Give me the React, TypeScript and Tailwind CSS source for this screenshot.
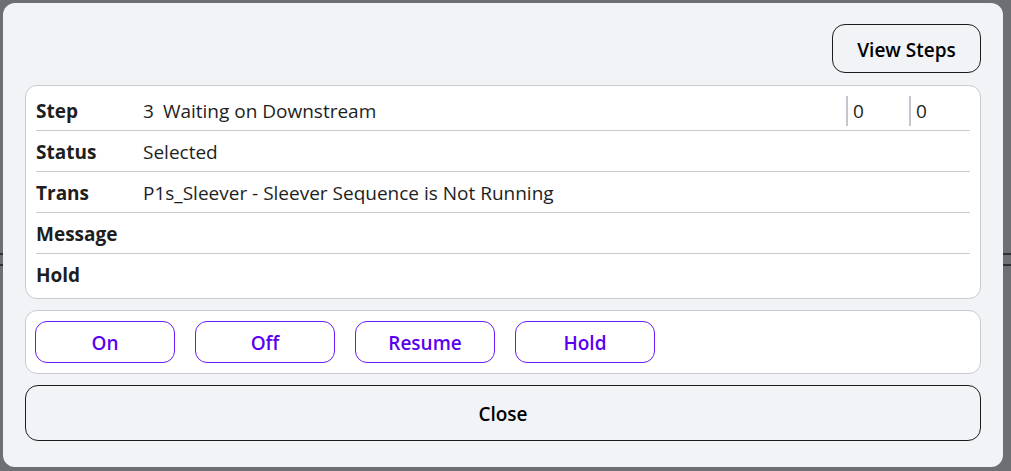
const rows = [
  { label: "Step", value: "" },
  { label: "Status", value: "Selected" },
  { label: "Trans", value: "P1s_Sleever - Sleever Sequence is Not Running" },
  { label: "Message", value: "" },
  { label: "Hold", value: "" },
];

const actions = ["On", "Off", "Resume", "Hold"];

export default function App() {
  return (
    <div
      className="relative w-[1011px] h-[471px] bg-[#6e6f74] overflow-hidden"
      style={{ fontFamily: '"Open Sans", "Noto Sans", sans-serif' }}
    >
      {/* page behind the dialog */}
      <div className="pt-[253px]">
        <div className="h-[13px] border-y-2 border-[#2f3033]" />
      </div>

      <div className="absolute left-[3px] top-[3px] w-[1000px] h-[464px] rounded-xl bg-[#f2f3f7] px-[22px] pt-[21px] flex flex-col">
        <div className="flex justify-end">
          <button className="w-[149px] h-[49px] pt-[3px] rounded-[13px] border border-[#1c1c1c] text-[19px] font-semibold text-black">
            View Steps
          </button>
        </div>

        <div className="mt-[12px] h-[214px] rounded-[12px] border border-[#c9cbd1] bg-white pl-[10px] pr-[10px] pt-[4px]">
          {rows.map((row, i) => (
            <div
              key={row.label}
              className={
                "h-[41px] pt-[2px] flex items-center text-[19px] text-[#1e1e1e] " +
                (i < rows.length - 1 ? "border-b border-[#c9cbd1]" : "")
              }
            >
              <span className="w-[107px] font-bold">{row.label}</span>
              {row.label === "Step" ? (
                <div className="flex-1 flex items-center">
                  <span className="flex-1 flex gap-[9px]">
                    <span>3</span>
                    <span>Waiting on Downstream</span>
                  </span>
                  <span className="w-[63px] h-[30px] border-l-2 border-[#c4c7cd] pl-[5px] flex items-center">
                    0
                  </span>
                  <span className="w-[61px] h-[30px] border-l-2 border-[#c4c7cd] pl-[5px] flex items-center">
                    0
                  </span>
                </div>
              ) : (
                <span>{row.value}</span>
              )}
            </div>
          ))}
        </div>

        <div className="mt-[11px] h-[64px] rounded-[12px] border border-[#c9cbd1] bg-white px-[9px] flex items-center gap-[20px]">
          {actions.map((a) => (
            <button
              key={a}
              className="w-[140px] h-[42px] pt-[3px] rounded-[12px] border border-[#6a1bff] text-[19px] font-semibold text-[#5a00f0]"
            >
              {a}
            </button>
          ))}
        </div>

        <button className="mt-[11px] h-[56px] pt-[2px] rounded-[13px] border border-[#1c1c1c] text-[19px] font-semibold text-black">
          Close
        </button>
      </div>
    </div>
  );
}
